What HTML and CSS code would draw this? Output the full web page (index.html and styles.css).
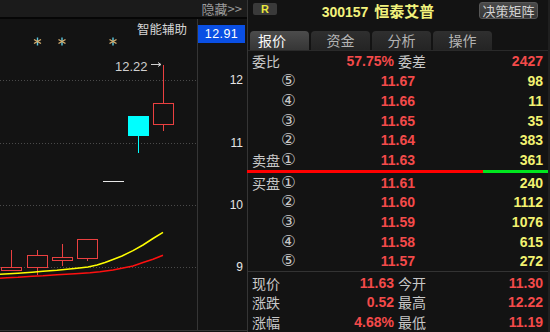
FILE: index.html
```html
<!DOCTYPE html>
<html lang="zh-CN">
<head>
<meta charset="utf-8">
<title>300157 恒泰艾普</title>
<link rel="stylesheet" href="styles.css">
</head>
<body>
<div class="app">
  <section class="left">
    <div class="topbar"><span class="hide">隐藏&gt;&gt;</span></div>
    <div class="chart-body">
      <div class="canvas">
        <svg class="plot" viewBox="0 19 197 311" width="197" height="311">
          <g class="grid">
            <line x1="0" y1="80.5" x2="197" y2="80.5"/>
            <line x1="0" y1="143.5" x2="197" y2="143.5"/>
            <line x1="0" y1="205.5" x2="197" y2="205.5"/>
            <line x1="0" y1="267.5" x2="197" y2="267.5"/>
          </g>
          <text class="assist" x="187" y="34" text-anchor="end">智能辅助</text>
          <g class="star" transform="translate(37.5,41.5)"><path class="s1" d="M0 -4V4"/><path class="s2" d="M-3.5 -2L3.5 2M-3.5 2L3.5 -2"/></g>
          <g class="star" transform="translate(62,41.5)"><path class="s1" d="M0 -4V4"/><path class="s2" d="M-3.5 -2L3.5 2M-3.5 2L3.5 -2"/></g>
          <g class="star" transform="translate(113,41.5)"><path class="s1" d="M0 -4V4"/><path class="s2" d="M-3.5 -2L3.5 2M-3.5 2L3.5 -2"/></g>
          <text class="hi" x="115" y="71">12.22</text>
          <path class="arrow" d="M151 64.5H161M158 62.5L161 64.5L158 66.5"/>
          <path class="up" d="M163.5 65V103.5M163.5 124.5V131"/>
          <rect class="up" x="153.5" y="103.5" width="20" height="21"/>
          <rect class="dn" x="128" y="116" width="21" height="20"/>
          <path class="dnw" d="M138.5 136V153"/>
          <path class="flat" d="M103 181.5H124"/>
          <path class="up" d="M11.5 250V267.5M37.5 250V255.5M37.5 267.5V275M62.5 244V257.5M62.5 260.5V266M87.5 258.5V261"/>
          <rect class="up" x="1.5" y="267.5" width="20" height="3"/>
          <rect class="up" x="27.5" y="255.5" width="20" height="12"/>
          <rect class="up" x="52.5" y="257.5" width="20" height="3"/>
          <rect class="up" x="77.5" y="239.5" width="20" height="19"/>
          <polyline class="ma2" points="0,278.3 7,277.8 18,277.3 32,276.3 43,275.8 57,274.8 75,273.8 90,272.8 100,271.8 113,270 123,268 133,266 143,262.5 153,259.3 163,255.3"/>
          <polyline class="ma1" points="0,274.3 18,273.3 32,272.3 43,271.3 57,270.3 67,269.3 77,268.3 88,267 97,265 105,262.5 113,259.5 122,256 133,250.7 143,245 153,238.5 163,232.3"/>
        </svg>
      </div>
      <div class="axis">
        <div class="cur">12.91</div>
        <span class="tick t12">12</span>
        <span class="tick t11">11</span>
        <span class="tick t10">10</span>
        <span class="tick t9">9</span>
      </div>
    </div>
  </section>

  <section class="right">
    <header class="head">
      <span class="badge">R</span>
      <span class="title"><span class="code">300157</span><span class="name">恒泰艾普</span></span>
      <span class="btn">决策矩阵</span>
    </header>
    <nav class="tabs">
      <span class="tab on">报价</span>
      <span class="tab">资金</span>
      <span class="tab">分析</span>
      <span class="tab">操作</span>
    </nav>
    <div class="pair summary">
      <span class="lab">委比</span><span class="num red">57.75%</span><span class="lab lab2">委差</span><span class="num red">2427</span>
    </div>
    <div class="book sell">
      <div class="row"><span class="lab"></span><span class="circ">⑤</span><span class="num red">11.67</span><span class="num yel">98</span></div>
      <div class="row"><span class="lab"></span><span class="circ">④</span><span class="num red">11.66</span><span class="num yel">11</span></div>
      <div class="row"><span class="lab"></span><span class="circ">③</span><span class="num red">11.65</span><span class="num yel">35</span></div>
      <div class="row"><span class="lab"></span><span class="circ">②</span><span class="num red">11.64</span><span class="num yel">383</span></div>
      <div class="row"><span class="lab">卖盘</span><span class="circ">①</span><span class="num red">11.63</span><span class="num yel">361</span></div>
    </div>
    <div class="divider"><i class="bid"></i><i class="ask"></i></div>
    <div class="book buy">
      <div class="row"><span class="lab">买盘</span><span class="circ">①</span><span class="num red">11.61</span><span class="num yel">240</span></div>
      <div class="row"><span class="lab"></span><span class="circ">②</span><span class="num red">11.60</span><span class="num yel">1112</span></div>
      <div class="row"><span class="lab"></span><span class="circ">③</span><span class="num red">11.59</span><span class="num yel">1076</span></div>
      <div class="row"><span class="lab"></span><span class="circ">④</span><span class="num red">11.58</span><span class="num yel">615</span></div>
      <div class="row"><span class="lab"></span><span class="circ">⑤</span><span class="num red">11.57</span><span class="num yel">272</span></div>
    </div>
    <div class="stats">
      <div class="pair"><span class="lab">现价</span><span class="num red">11.63</span><span class="lab lab2">今开</span><span class="num red">11.30</span></div>
      <div class="pair"><span class="lab">涨跌</span><span class="num red">0.52</span><span class="lab lab2">最高</span><span class="num red">12.22</span></div>
      <div class="pair"><span class="lab">涨幅</span><span class="num red">4.68%</span><span class="lab lab2">最低</span><span class="num red">11.19</span></div>
    </div>
  </section>
</div>
</body>
</html>
```

FILE: styles.css
```css
* { box-sizing: border-box; margin: 0; padding: 0; }

body {
  margin: 0;
  width: 550px;
  height: 332px;
  overflow: hidden;
  background: #131313;
  font-family: "Noto Sans CJK SC", sans-serif;
}

.app { display: flex; height: 332px; }

/* ---------- left: chart ---------- */
.left {
  width: 248px;
  border-right: 1px solid #353535;
  display: flex;
  flex-direction: column;
}

.topbar {
  height: 19px;
  background: #1b1b1b;
  border-bottom: 2px solid #060606;
  display: flex;
  justify-content: flex-end;
  align-items: center;
  padding-right: 5px;
}
.hide { color: #9c9c9c; font-size: 13px; line-height: 17px; }

.chart-body {
  display: flex;
  height: 312px;
  border-bottom: 1px solid #353535;
}

.canvas {
  position: relative;
  width: 198px;
  border-right: 1px solid #353535;
}
.plot { position: absolute; left: 0; top: 0; display: block; }

.grid line { stroke: #4a4a4a; stroke-width: 1; stroke-dasharray: 1 2; }
.assist { fill: #d6d6d6; font-family: "Noto Sans CJK SC", sans-serif; font-size: 12.5px; }
.hi { fill: #cfcfcf; font-family: "Liberation Sans", sans-serif; font-size: 13px; }
.arrow { fill: none; stroke: #cfcfcf; stroke-width: 1; }
.star path { stroke-width: 1.4; fill: none; }
.star .s1 { stroke: #5cc8e0; }
.star .s2 { stroke: #d8b070; }
.up { fill: none; stroke: #ea4040; stroke-width: 1; shape-rendering: crispEdges; }
.dn { fill: #00ffff; shape-rendering: crispEdges; }
.dnw { stroke: #00ffff; stroke-width: 1; shape-rendering: crispEdges; }
.flat { stroke: #e8e8e8; stroke-width: 1; shape-rendering: crispEdges; }
.ma1 { fill: none; stroke: #ffff00; stroke-width: 1.5; }
.ma2 { fill: none; stroke: #ff1010; stroke-width: 1.5; }

.axis { position: relative; flex: 1; }
.cur {
  margin-top: 6px;
  width: 47px;
  height: 18px;
  background: #0a4fe4;
  color: #ffffff;
  font-family: "Liberation Sans", sans-serif;
  font-size: 12.5px;
  letter-spacing: 0.4px;
  line-height: 18px;
  text-align: center;
}
.tick {
  position: absolute;
  right: 4px;
  color: #e6e6e6;
  font-family: "Liberation Sans", sans-serif;
  font-size: 12px;
  line-height: 14px;
}
.t12 { top: 54px; }
.t11 { top: 117px; }
.t10 { top: 179px; }
.t9 { top: 241px; }

/* ---------- right: quote ---------- */
.right {
  width: 302px;
  display: flex;
  flex-direction: column;
  border-right: 2px solid #1f1f1f;
}

.head {
  height: 21px;
  display: flex;
  align-items: center;
  padding: 0 10px 0 5px;
}
.badge {
  width: 24px;
  height: 12px;
  margin-top: -3px;
  background: #3a3a3a;
  border-radius: 2px;
  color: #e8e83c;
  font: bold 11px/12px "Liberation Sans", sans-serif;
  text-align: center;
}
.title {
  flex: 1;
  text-align: center;
  color: #f2f27c;
  line-height: 20px;
}
.code { font: bold 14px "Liberation Sans", sans-serif; }
.name { font: bold 15px "Noto Sans CJK SC", sans-serif; margin-left: 6px; }
.btn {
  width: 59px;
  height: 17px;
  background: linear-gradient(#4a4a4a, #343434);
  border: 1px solid #575757;
  border-radius: 3px;
  color: #d2d2d2;
  font-size: 13px;
  line-height: 15px;
  text-align: center;
}

.tabs {
  margin-top: 10px;
  height: 20px;
  display: flex;
  align-items: flex-end;
  gap: 2px;
  padding-left: 2px;
  border-bottom: 1px solid #2a2a2a;
}
.tab {
  width: 59px;
  height: 19px;
  background: linear-gradient(#2f2f2f, #242424);
  border-radius: 4px 4px 0 0;
  color: #b4b4b4;
  font-size: 14px;
  line-height: 19px;
  text-align: center;
}
.tab.on {
  background: linear-gradient(#4c4c4c, #363636);
  color: #fafafa;
  text-align: left;
  padding-left: 8px;
}

.lab { color: #c8c8c8; font-size: 14px; line-height: 16px; white-space: nowrap; }
.lab2 { padding-left: 4px; }
.num {
  font-family: "Liberation Sans", sans-serif;
  font-weight: bold;
  font-size: 14px;
  line-height: 16px;
  text-align: right;
}
.red { color: #f44a4a; }
.yel { color: #f2f270; }
.circ {
  color: #c8c8c8;
  font-family: "DejaVu Sans", sans-serif;
  font-size: 16.5px;
  line-height: 16px;
  margin-left: -1px;
  white-space: nowrap;
}

.pair {
  display: grid;
  grid-template-columns: 40px 102px 36px 113px;
  align-items: center;
  padding-left: 4px;
  height: 19.7px;
}
.summary { height: 21px; }

.row {
  display: grid;
  grid-template-columns: 30px 16px 117px 128px;
  align-items: center;
  padding-left: 4px;
}
.sell .row { height: 19.8px; }
.buy .row { height: 19.6px; }

.divider {
  height: 3px;
  display: flex;
  margin-left: -1px;
}
.bid { width: 236px; background: #ff0000; }
.ask { flex: 1; background: #00e61e; }

.stats {
  border-top: 1px solid #333333;
  padding-top: 1px;
}
```
